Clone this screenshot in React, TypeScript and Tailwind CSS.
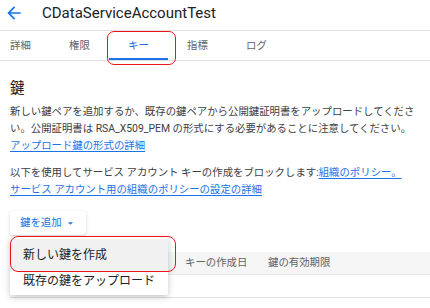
const tabs = ["詳細", "権限", "キー", "指標", "ログ"];

function BackArrow() {
    return (
        <svg width="20" height="20" viewBox="0 0 24 24" className="fill-[#1a73e8]">
            <path d="M20 11H7.83l5.59-5.59L12 4l-8 8 8 8 1.41-1.41L7.83 13H20v-2z" />
        </svg>
    );
}

export default function App() {
    return (
        <div className="relative w-[430px] h-[308px] overflow-hidden bg-white text-[#202124] font-[family-name:Roboto,'Noto_Sans_CJK_JP',sans-serif]">
            {/* Header */}
            <div className="h-[30px]">
                <div className="flex items-center h-[25px] pl-[4px]">
                    <BackArrow />
                    <span className="ml-[18px] text-[15px] leading-[20px] text-[#202124]">
                        CDataServiceAccountTest
                    </span>
                </div>
            </div>

            {/* Tabs */}
            <div className="relative border-y border-[#e0e0e0] h-[31px]">
                <div className="flex -ml-[9px] h-full">
                    {tabs.map((t) => {
                        const active = t === "キー";
                        return (
                            <div
                                key={t}
                                className={
                                    active
                                        ? "relative w-[59px] flex items-center justify-center text-[10.4px] text-[#1a73e8]"
                                        : "relative w-[59px] flex items-center justify-center text-[10.4px] text-[#5f6368]"
                                }
                            >
                                {t}
                                {active && (
                                    <div className="absolute left-0 right-0 bottom-0 h-[2px] bg-[#1a73e8]" />
                                )}
                            </div>
                        );
                    })}
                </div>
                {/* annotation */}
                <div className="absolute left-[107px] top-0 w-[69px] h-[34px] rounded-[7px] border-[1.5px] border-[#e8161b]" />
            </div>

            {/* Content */}
            <div className="px-[10px]">
                <h2 className="mt-[18px] text-[14.5px] leading-[20px] text-[#202124]">鍵</h2>
                <p className="mt-[4px] text-[10.4px] leading-[17px] text-[#3c4043] whitespace-nowrap">
                    新しい鍵ペアを追加するか、既存の鍵ペアから公開鍵証明書をアップロードしてくださ
                    <br />
                    い。公開証明書は RSA_X509_PEM の形式にする必要があることに注意してください。
                    <br />
                    <a className="text-[#1a73e8] underline underline-offset-2">
                        アップロード鍵の形式の詳細
                    </a>
                </p>
                <p className="mt-[10px] text-[10.4px] leading-[17px] text-[#3c4043] whitespace-nowrap">
                    以下を使用してサービス アカウント キーの作成をブロックします:
                    <a className="text-[#1a73e8] underline underline-offset-2">組織のポリシー。</a>
                    <br />
                    <a className="text-[#1a73e8] underline underline-offset-2">
                        サービス アカウント用の組織のポリシーの設定の詳細
                    </a>
                </p>

                {/* Add key button + menu */}
                <div className="relative mt-[13px]">
                    <button className="flex items-center h-[24px] w-[76px] pl-[10px] rounded-[4px] bg-white shadow-[0_1px_3px_rgba(60,64,67,0.25)] text-[10.4px] text-[#1a73e8]">
                        鍵を追加
                        <svg width="5" height="3" viewBox="0 0 10 5" className="ml-[6px] fill-[#1a73e8]">
                            <path d="M0 0l5 5 5-5z" />
                        </svg>
                    </button>

                    <div className="absolute z-10 left-0 top-[26px] w-[158px] pt-[2px] pb-[4px] bg-white rounded-[2px] shadow-[0_2px_6px_rgba(60,64,67,0.3)]">
                        <div className="flex items-center h-[32px] pl-[13px] bg-[#f1f1f1] text-[12px] text-[#202124]">
                            新しい鍵を作成
                        </div>
                        <div className="flex items-center h-[20px] pl-[13px] text-[12px] text-[#202124]">
                            既存の鍵をアップロード
                        </div>
                    </div>
                    <div className="absolute z-20 left-0 top-[25px] w-[166px] h-[36px] rounded-[8px] border-[1.5px] border-[#e8161b]" />
                </div>

                {/* Keys table */}
                <div className="mt-[17px] -mr-[10px]">
                    <div className="flex items-center h-[23px] bg-[#f5f5f5] border-b border-[#e8e8e8] text-[10.4px] text-[#5f6368]">
                        <div className="w-[175px]" />
                        <div className="w-[83px]">キーの作成日</div>
                        <div>鍵の有効期限</div>
                    </div>
                    <div className="h-[23px] border-b border-[#e0e0e0]" />
                </div>
            </div>
        </div>
    );
}
